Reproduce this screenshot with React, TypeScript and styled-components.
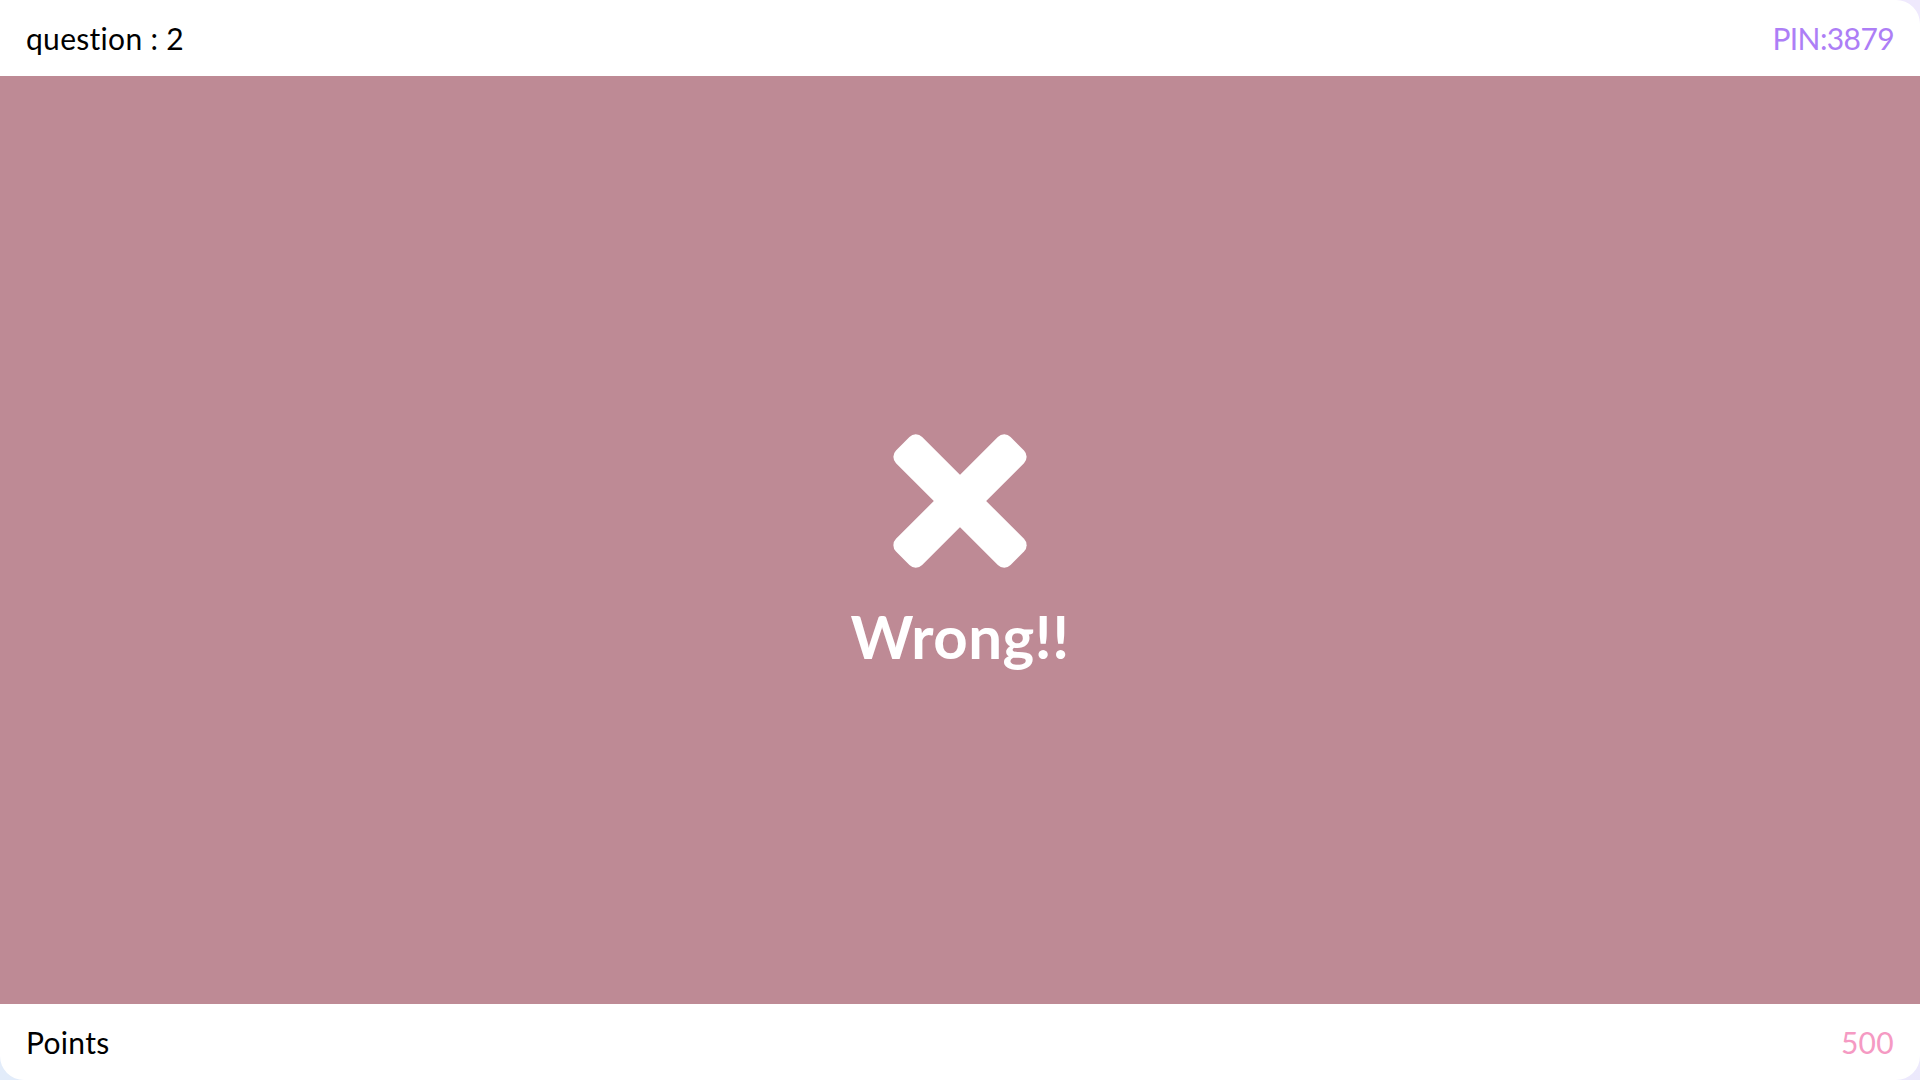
import React from "react";
import styled, { createGlobalStyle } from "styled-components";

const GlobalStyle = createGlobalStyle`
  html, body { margin: 0; padding: 0; }
  body {
    font-family: "Lato", "Noto Sans", sans-serif;
    background: linear-gradient(45deg, #e2ecfa 0%, #ebe9fc 50%, #efe9fd 100%);
  }
`;

const Page = styled.div`
  width: 1920px;
  height: 1080px;
  display: flex;
  flex-direction: column;
  background: #ffffff;
  border-radius: 0 24px 24px 24px;
  overflow: hidden;
`;

const Bar = styled.div`
  height: 76px;
  flex: 0 0 76px;
  display: flex;
  align-items: center;
  justify-content: space-between;
  padding: 0 26px;
  box-sizing: border-box;
  font-size: 30px;
  color: #000;
`;

const Label = styled.span<{ $color?: string; $spacing?: string }>`
  color: ${(p) => p.$color || "#000"};
  letter-spacing: ${(p) => p.$spacing || "0.3px"};
`;

const Stage = styled.main`
  flex: 1;
  background: #be8a95;
  display: flex;
  flex-direction: column;
  align-items: center;
  justify-content: center;
  padding-top: 22px;
`;

const Mark = styled.svg`
  width: 136px;
  height: 136px;
  display: block;
`;

const Verdict = styled.div`
  margin-top: 34px;
  font-size: 60px;
  font-weight: 700;
  color: #ffffff;
  line-height: 1.1;
  letter-spacing: 0.5px;
`;

export default function App() {
  return (
    <>
      <GlobalStyle />
      <Page>
        <Bar>
          <Label>question : 2</Label>
          <Label $color="#ad7ef6" $spacing="-0.6px">PIN:3879</Label>
        </Bar>
        <Stage>
          <Mark viewBox="-68 -68 136 136">
            <g fill="#ffffff">
              <rect x="-18.5" y="-81" width="37" height="162" rx="9" transform="rotate(45)" />
              <rect x="-18.5" y="-81" width="37" height="162" rx="9" transform="rotate(-45)" />
            </g>
          </Mark>
          <Verdict>Wrong!!</Verdict>
        </Stage>
        <Bar>
          <Label>Points</Label>
          <Label $color="#f59ac3">500</Label>
        </Bar>
      </Page>
    </>
  );
}
